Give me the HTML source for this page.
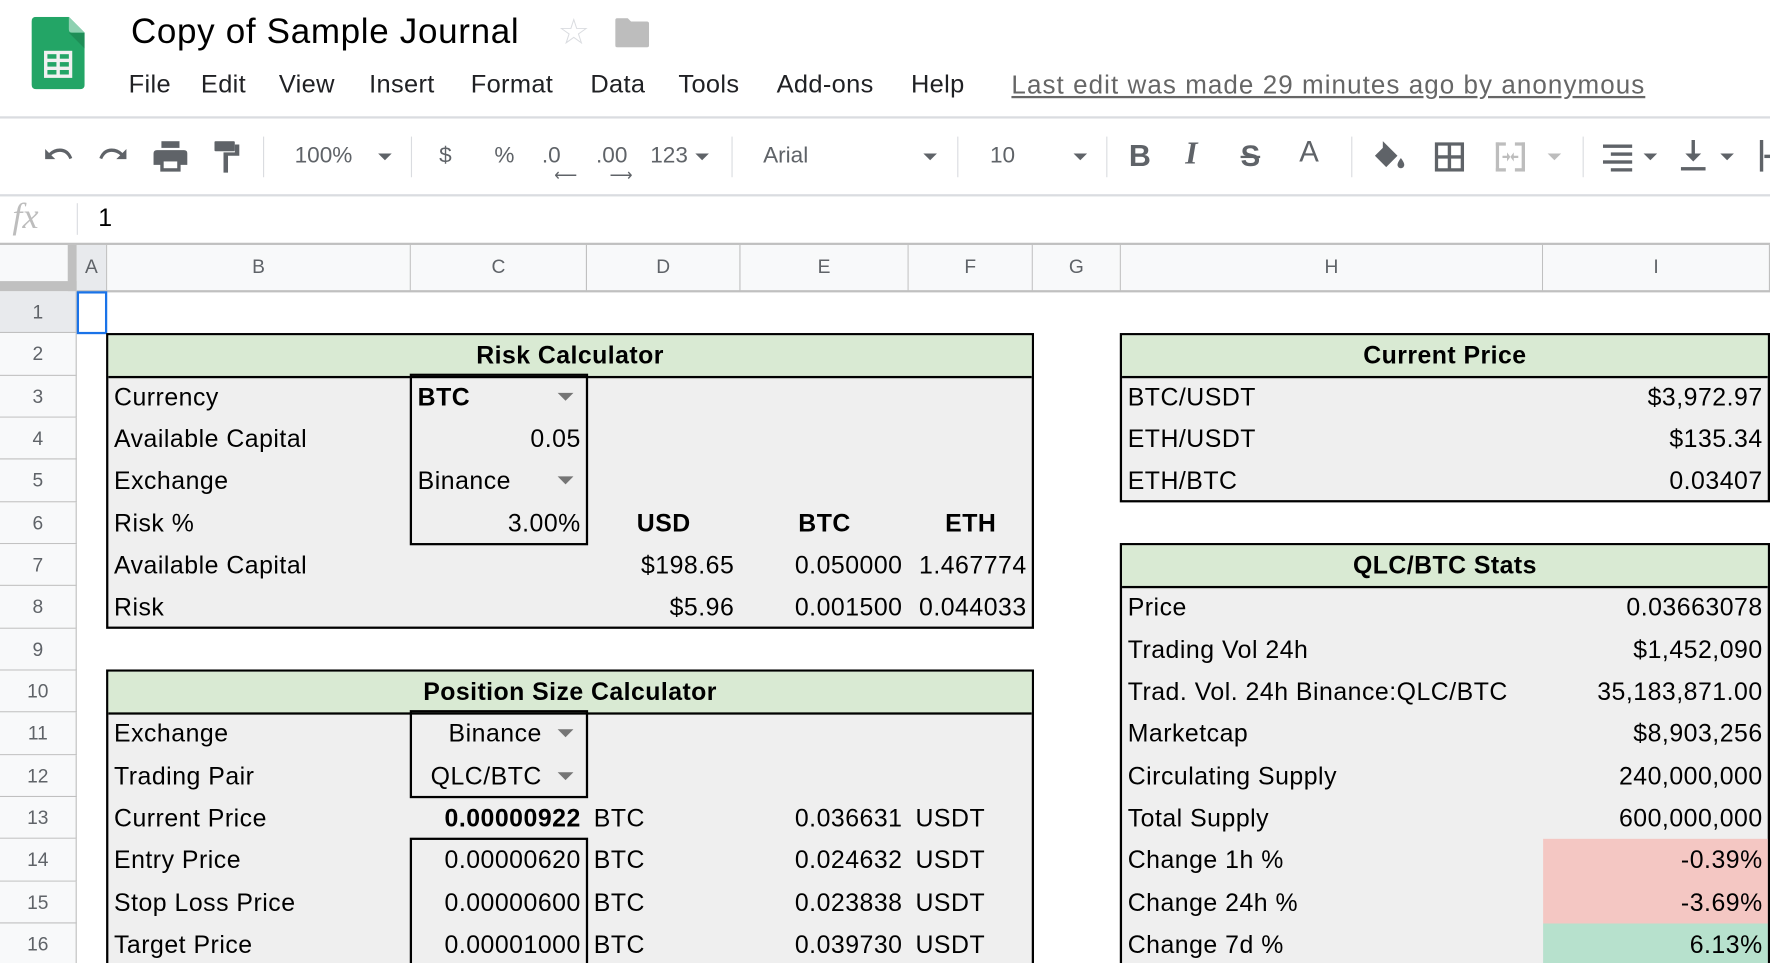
<!DOCTYPE html>
<html><head><meta charset="utf-8"><style>
html,body{margin:0;padding:0;width:1770px;height:963px;overflow:hidden;background:#fff}
#w{position:absolute;left:0;top:0;width:1568px;height:853px;transform:scale(1.12883,1.12896);transform-origin:0 0;font-family:"Liberation Sans",Arial,sans-serif;overflow:hidden}
.a{position:absolute}
.c{position:absolute;height:37px;line-height:37px;font-size:22px;letter-spacing:0.45px;color:#000;white-space:nowrap;box-sizing:border-box;padding:0 6px}
.r{text-align:right;padding-right:5.5px}.b{font-weight:bold}.ctr{text-align:center}
.box{position:absolute;background:#efefef;border:2px solid #000;box-sizing:border-box}
.hd{position:absolute;background:#d9ead3;border-bottom:2px solid #000;box-sizing:border-box;left:0;right:0;top:0;height:38px;line-height:36px;text-align:center;font-weight:bold;font-size:22px;letter-spacing:0.4px}
.in{position:absolute;border:2px solid #000;box-sizing:border-box}
.tri{position:absolute;width:0;height:0;border-left:7px solid transparent;border-right:7px solid transparent;border-top:7px solid #757575}
.menu{position:absolute;top:62px;font-size:22.5px;color:#202124;letter-spacing:0.3px}
.tb{position:absolute;color:#5f6368;font-size:20px;top:127px}
.sep{position:absolute;top:121px;width:1px;height:36px;background:#dadce0}
.car{position:absolute;top:136px;width:0;height:0;border-left:6px solid transparent;border-right:6px solid transparent;border-top:6px solid #5f6368}
.colh{position:absolute;top:217px;height:41px;line-height:40px;text-align:center;font-size:17px;color:#5f6368;border-right:1px solid #c0c0c0;box-sizing:border-box;background:#f8f9fa}
.rowh{position:absolute;left:0;width:68px;text-align:center;font-size:17px;color:#5f6368;border-bottom:1px solid #c0c0c0;border-right:1px solid #c0c0c0;box-sizing:border-box;background:#f8f9fa;height:37.33px;line-height:37px}
</style></head><body><div id="w">
<svg class="a" style="left:28px;top:15px" width="47" height="64" viewBox="0 0 47 64">
<path d="M4 0H33L47 14V60Q47 64 43 64H4Q0 64 0 60V4Q0 0 4 0Z" fill="#23a566"/>
<path d="M33 0L47 14H36Q33 14 33 11Z" fill="#8ed1b1"/>
<path d="M33 14L47 28V14Z" fill="#1e8e57"/>
<rect x="11" y="30" width="25" height="24" fill="#f1f1f1"/>
<rect x="14" y="33" width="8" height="4" fill="#23a566"/><rect x="25" y="33" width="8" height="4" fill="#23a566"/>
<rect x="14" y="40" width="8" height="4" fill="#23a566"/><rect x="25" y="40" width="8" height="4" fill="#23a566"/>
<rect x="14" y="47" width="8" height="4" fill="#23a566"/><rect x="25" y="47" width="8" height="4" fill="#23a566"/>
</svg>
<div class="a" style="left:116px;top:10px;font-size:31px;letter-spacing:0.6px;color:#000">Copy of Sample Journal</div>
<div class="a" style="left:494px;top:9px;font-size:32px;color:#dadce0">☆</div>
<svg class="a" style="left:545px;top:16px" width="30" height="26" viewBox="0 0 30 26"><path d="M0 2Q0 0 2 0H11L14 3H28Q30 3 30 5V24Q30 26 28 26H2Q0 26 0 24Z" fill="#bdbdbd"/></svg>
<div class="menu" style="left:114px">File</div>
<div class="menu" style="left:178px">Edit</div>
<div class="menu" style="left:247px">View</div>
<div class="menu" style="left:327px">Insert</div>
<div class="menu" style="left:417px">Format</div>
<div class="menu" style="left:523px">Data</div>
<div class="menu" style="left:601px">Tools</div>
<div class="menu" style="left:688px">Add-ons</div>
<div class="menu" style="left:807px">Help</div>
<div class="menu" style="left:896px;color:#666;text-decoration:underline;font-size:23px;letter-spacing:0.95px">Last edit was made 29 minutes ago by anonymous</div>
<div class="a" style="left:0;top:103px;width:1568px;height:2px;background:#dadce0"></div>
<svg class="a" style="left:36px;top:128px" width="30" height="22" viewBox="0 0 30 22"><path d="M4 4V13H13L9.5 9.5Q13 6.5 17 6.5Q23 6.5 25.5 13L28 12Q25 3.5 17 3.5Q11.5 3.5 7.5 7.5Z" fill="#5f6368"/></svg>
<svg class="a" style="left:86px;top:128px" width="30" height="22" viewBox="0 0 30 22"><g transform="translate(30,0) scale(-1,1)"><path d="M4 4V13H13L9.5 9.5Q13 6.5 17 6.5Q23 6.5 25.5 13L28 12Q25 3.5 17 3.5Q11.5 3.5 7.5 7.5Z" fill="#5f6368"/></g></svg>
<svg class="a" style="left:136px;top:125px" width="30" height="28" viewBox="0 0 30 28"><rect x="7" y="0" width="16" height="6" fill="#5f6368"/><path d="M3 8H27Q30 8 30 11V21H24V27H6V21H0V11Q0 8 3 8Z" fill="#5f6368"/><rect x="9" y="18" width="12" height="6" fill="#fff"/></svg>
<svg class="a" style="left:190px;top:125px" width="24" height="28" viewBox="0 0 24 28"><rect x="0" y="0" width="18" height="9" rx="1" fill="#5f6368"/><path d="M18 3H22V13H12V28H8V10H18Z" fill="#5f6368"/></svg>
<div class="sep" style="left:233px"></div>
<div class="tb" style="left:261px">100%</div><div class="car" style="left:335px"></div>
<div class="sep" style="left:364px"></div>
<div class="tb" style="left:389px">$</div>
<div class="tb" style="left:438px">%</div>
<div class="tb" style="left:480px">.0</div><div class="a" style="left:491px;top:151px;font-size:14px;color:#5f6368;line-height:8px">⟵</div>
<div class="tb" style="left:528px">.00</div><div class="a" style="left:540px;top:151px;font-size:14px;color:#5f6368;line-height:8px">⟶</div>
<div class="tb" style="left:576px">123</div><div class="car" style="left:616px"></div>
<div class="sep" style="left:648px"></div>
<div class="tb" style="left:676px">Arial</div><div class="car" style="left:818px"></div>
<div class="sep" style="left:848px"></div>
<div class="tb" style="left:877px">10</div><div class="car" style="left:951px"></div>
<div class="sep" style="left:980px"></div>
<div class="tb" style="left:1000px;font-weight:bold;font-size:27px;top:123px">B</div>
<div class="tb" style="left:1050px;font-style:italic;font-weight:bold;font-family:'Liberation Serif',serif;font-size:28px;top:121px">I</div>
<div class="tb" style="left:1099px;text-decoration:line-through;font-weight:bold;font-size:26px;top:123px">S</div>
<div class="tb" style="left:1151px;font-size:26px;top:119px">A</div>
<div class="sep" style="left:1197px"></div>
<svg class="a" style="left:1217px;top:125px" width="28" height="26" viewBox="0 0 28 26"><path d="M8 0L21 13L11 23L1 13L8 6Z" fill="#5f6368"/><path d="M24 15Q27 19 27 21A3 3 0 0 1 21 21Q21 19 24 15Z" fill="#5f6368"/></svg>
<svg class="a" style="left:1271px;top:126px" width="26" height="26" viewBox="0 0 26 26"><path d="M0 0H26V26H0ZM3 3V11.5H11.5V3ZM14.5 3V11.5H23V3ZM3 14.5V23H11.5V14.5ZM14.5 14.5V23H23V14.5Z" fill="#5f6368"/></svg>
<svg class="a" style="left:1325px;top:126px" width="26" height="26" viewBox="0 0 26 26" fill="#bdbdbd"><rect x="0" y="0" width="3" height="26"/><rect x="23" y="0" width="3" height="26"/><rect x="0" y="0" width="9" height="3"/><rect x="17" y="0" width="9" height="3"/><rect x="0" y="23" width="9" height="3"/><rect x="17" y="23" width="9" height="3"/><path d="M6 12H10V9L13 13L10 17V14H6Z"/><path d="M20 12H16V9L13 13L16 17V14H20Z"/></svg>
<div class="car" style="left:1371px;border-top-color:#bdbdbd"></div>
<div class="sep" style="left:1402px"></div>
<svg class="a" style="left:1420px;top:128px" width="26" height="24" viewBox="0 0 26 24" fill="#5f6368"><rect x="0" y="0" width="26" height="3"/><rect x="7" y="7" width="19" height="3"/><rect x="0" y="14" width="26" height="3"/><rect x="7" y="21" width="19" height="3"/></svg>
<div class="car" style="left:1456px"></div>
<svg class="a" style="left:1489px;top:124px" width="22" height="28" viewBox="0 0 22 28" fill="#5f6368"><rect x="9.5" y="0" width="3" height="14"/><path d="M4 12H18L11 19Z"/><rect x="0" y="24" width="22" height="3"/></svg>
<div class="car" style="left:1524px"></div>
<div class="a" style="left:1559px;top:124px;width:3px;height:28px;background:#5f6368"></div>
<div class="a" style="left:1563px;top:137px;width:5px;height:3px;background:#5f6368"></div>
<div class="a" style="left:0;top:172px;width:1568px;height:2px;background:#dadce0"></div>
<div class="a" style="left:11px;top:173px;font-family:'Liberation Serif',serif;font-style:italic;font-size:32px;color:#bdbdbd">fx</div>
<div class="a" style="left:68px;top:180px;width:1px;height:28px;background:#dadce0"></div>
<div class="a" style="left:87px;top:180px;font-size:22px;color:#000">1</div>
<div class="a" style="left:0;top:215px;width:1568px;height:2px;background:#c0c0c0"></div>
<div class="a" style="left:0;top:217px;width:68px;height:41px;background:#f8f9fa"></div>
<div class="a" style="left:60px;top:217px;width:8px;height:41px;background:#c0c0c0"></div>
<div class="a" style="left:0;top:249px;width:68px;height:9px;background:#c0c0c0"></div>
<div class="colh" style="left:68px;width:27px;background:#e8eaed">A</div>
<div class="colh" style="left:95px;width:269px">B</div>
<div class="colh" style="left:364px;width:156px">C</div>
<div class="colh" style="left:520px;width:136px">D</div>
<div class="colh" style="left:656px;width:149px">E</div>
<div class="colh" style="left:805px;width:110px">F</div>
<div class="colh" style="left:915px;width:78px">G</div>
<div class="colh" style="left:993px;width:374px">H</div>
<div class="colh" style="left:1367px;width:201px">I</div>
<div class="a" style="left:68px;top:257px;width:1500px;height:2px;background:#c0c0c0"></div>
<div class="rowh" style="top:258px;background:#e8eaed">1</div>
<div class="rowh" style="top:295.33px">2</div>
<div class="rowh" style="top:332.67px">3</div>
<div class="rowh" style="top:370px">4</div>
<div class="rowh" style="top:407.33px">5</div>
<div class="rowh" style="top:444.67px">6</div>
<div class="rowh" style="top:482px">7</div>
<div class="rowh" style="top:519.33px">8</div>
<div class="rowh" style="top:556.67px">9</div>
<div class="rowh" style="top:594px">10</div>
<div class="rowh" style="top:631.33px">11</div>
<div class="rowh" style="top:668.67px">12</div>
<div class="rowh" style="top:706px">13</div>
<div class="rowh" style="top:743.33px">14</div>
<div class="rowh" style="top:780.67px">15</div>
<div class="rowh" style="top:818px">16</div>
<div class="a" style="left:68px;top:258px;width:27px;height:38px;border:2px solid #1a73e8;box-sizing:border-box"></div>

<div class="box" style="left:94px;top:295px;width:822px;height:262px"><div class="hd">Risk Calculator</div></div>
<div class="in" style="left:363px;top:331px;width:158px;height:152px"></div>
<div class="c" style="left:95px;top:333px">Currency</div>
<div class="c b" style="left:364px;top:333px">BTC</div><div class="tri" style="left:494px;top:348px"></div>
<div class="c" style="left:95px;top:370px">Available Capital</div>
<div class="c r" style="left:364px;top:370px;width:156px">0.05</div>
<div class="c" style="left:95px;top:407px">Exchange</div>
<div class="c" style="left:364px;top:407px">Binance</div><div class="tri" style="left:494px;top:422px"></div>
<div class="c" style="left:95px;top:445px">Risk %</div>
<div class="c r" style="left:364px;top:445px;width:156px">3.00%</div>
<div class="c b ctr" style="left:520px;top:445px;width:136px">USD</div>
<div class="c b ctr" style="left:656px;top:445px;width:149px">BTC</div>
<div class="c b ctr" style="left:805px;top:445px;width:110px">ETH</div>
<div class="c" style="left:95px;top:482px">Available Capital</div>
<div class="c r" style="left:520px;top:482px;width:136px">$198.65</div>
<div class="c r" style="left:656px;top:482px;width:149px">0.050000</div>
<div class="c r" style="left:805px;top:482px;width:110px">1.467774</div>
<div class="c" style="left:95px;top:519px">Risk</div>
<div class="c r" style="left:520px;top:519px;width:136px">$5.96</div>
<div class="c r" style="left:656px;top:519px;width:149px">0.001500</div>
<div class="c r" style="left:805px;top:519px;width:110px">0.044033</div>

<div class="box" style="left:94px;top:593px;width:822px;height:280px"><div class="hd">Position Size Calculator</div></div>
<div class="in" style="left:363px;top:629px;width:158px;height:78px"></div>
<div class="in" style="left:363px;top:742px;width:158px;height:130px"></div>
<div class="c" style="left:95px;top:631px">Exchange</div>
<div class="c r" style="left:364px;top:631px;width:156px;padding-right:40px">Binance</div><div class="tri" style="left:494px;top:646px"></div>
<div class="c" style="left:95px;top:669px">Trading Pair</div>
<div class="c r" style="left:364px;top:669px;width:156px;padding-right:40px">QLC/BTC</div><div class="tri" style="left:494px;top:684px"></div>
<div class="c" style="left:95px;top:706px">Current Price</div>
<div class="c r b" style="left:364px;top:706px;width:156px">0.00000922</div>
<div class="c" style="left:520px;top:706px">BTC</div>
<div class="c r" style="left:656px;top:706px;width:149px">0.036631</div>
<div class="c" style="left:805px;top:706px">USDT</div>
<div class="c" style="left:95px;top:743px">Entry Price</div>
<div class="c r" style="left:364px;top:743px;width:156px">0.00000620</div>
<div class="c" style="left:520px;top:743px">BTC</div>
<div class="c r" style="left:656px;top:743px;width:149px">0.024632</div>
<div class="c" style="left:805px;top:743px">USDT</div>
<div class="c" style="left:95px;top:781px">Stop Loss Price</div>
<div class="c r" style="left:364px;top:781px;width:156px">0.00000600</div>
<div class="c" style="left:520px;top:781px">BTC</div>
<div class="c r" style="left:656px;top:781px;width:149px">0.023838</div>
<div class="c" style="left:805px;top:781px">USDT</div>
<div class="c" style="left:95px;top:818px">Target Price</div>
<div class="c r" style="left:364px;top:818px;width:156px">0.00001000</div>
<div class="c" style="left:520px;top:818px">BTC</div>
<div class="c r" style="left:656px;top:818px;width:149px">0.039730</div>
<div class="c" style="left:805px;top:818px">USDT</div>

<div class="box" style="left:992px;top:295px;width:576px;height:150px"><div class="hd">Current Price</div></div>
<div class="c" style="left:993px;top:333px">BTC/USDT</div><div class="c r" style="left:1367px;top:333px;width:200px">$3,972.97</div>
<div class="c" style="left:993px;top:370px">ETH/USDT</div><div class="c r" style="left:1367px;top:370px;width:200px">$135.34</div>
<div class="c" style="left:993px;top:407px">ETH/BTC</div><div class="c r" style="left:1367px;top:407px;width:200px">0.03407</div>

<div class="box" style="left:992px;top:481px;width:576px;height:400px"><div class="hd">QLC/BTC Stats</div></div>
<div class="a" style="left:1367px;top:743px;width:199px;height:75px;background:#f4c7c3"></div>
<div class="a" style="left:1367px;top:818px;width:199px;height:40px;background:#b7e1cd"></div>
<div class="c" style="left:993px;top:519px">Price</div><div class="c r" style="left:1367px;top:519px;width:200px">0.03663078</div>
<div class="c" style="left:993px;top:557px">Trading Vol 24h</div><div class="c r" style="left:1367px;top:557px;width:200px">$1,452,090</div>
<div class="c" style="left:993px;top:594px">Trad. Vol. 24h Binance:QLC/BTC</div><div class="c r" style="left:1367px;top:594px;width:200px">35,183,871.00</div>
<div class="c" style="left:993px;top:631px">Marketcap</div><div class="c r" style="left:1367px;top:631px;width:200px">$8,903,256</div>
<div class="c" style="left:993px;top:669px">Circulating Supply</div><div class="c r" style="left:1367px;top:669px;width:200px">240,000,000</div>
<div class="c" style="left:993px;top:706px">Total Supply</div><div class="c r" style="left:1367px;top:706px;width:200px">600,000,000</div>
<div class="c" style="left:993px;top:743px">Change 1h %</div><div class="c r" style="left:1367px;top:743px;width:200px">-0.39%</div>
<div class="c" style="left:993px;top:781px">Change 24h %</div><div class="c r" style="left:1367px;top:781px;width:200px">-3.69%</div>
<div class="c" style="left:993px;top:818px">Change 7d %</div><div class="c r" style="left:1367px;top:818px;width:200px">6.13%</div>
</div></body></html>
